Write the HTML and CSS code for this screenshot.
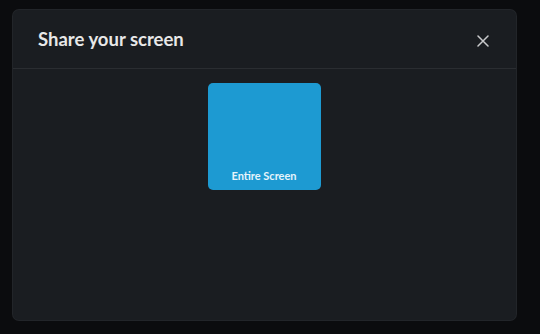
FILE: index.html
```html
<!DOCTYPE html>
<html lang="en">
<head>
  <meta charset="UTF-8">
  <title>Share your screen</title>
  <link rel="stylesheet" href="styles.css">
</head>
<body>
  <div class="modal">
    <div class="modal-header">
      <h1>Share your screen</h1>
      <button class="close" aria-label="Close">
        <svg width="12" height="12" viewBox="0 0 12 12"><path d="M1 1L11 11M11 1L1 11" stroke="#c9cacc" stroke-width="1.5" stroke-linecap="round"/></svg>
      </button>
    </div>
    <div class="modal-body">
      <div class="source">
        <span>Entire Screen</span>
      </div>
    </div>
  </div>
</body>
</html>
```

FILE: styles.css
```css
html, body {
  height: 100%;
}
body {
  margin: 0;
  padding: 10px 0 0 13px;
  box-sizing: border-box;
  background-color: #0b0c0e;
  font-family: Lato, "Open Sans", sans-serif;
}
.modal {
  width: 503px;
  height: 310px;
  background: #1a1d21;
  border-radius: 6px;
  box-shadow: 0 0 0 1px #222529;
  display: flex;
  flex-direction: column;
}
.modal-header {
  height: 58px;
  display: flex;
  align-items: center;
  justify-content: space-between;
  padding: 0 25px;
  border-bottom: 1px solid #2a2d31;
}
.modal-header h1 {
  margin: 0;
  font-size: 18.5px;
  font-weight: 700;
  color: #e8e8e8;
}
.close {
  background: none;
  border: none;
  padding: 0;
  width: 12px;
  height: 12px;
  margin-right: 2px;
  margin-top: 4px;
  cursor: pointer;
}
.close svg {
  display: block;
}
.modal-body {
  flex: 1;
  display: flex;
  justify-content: center;
  padding-top: 14px;
}
.source {
  width: 113px;
  height: 107px;
  margin-right: 1px;
  background: #1d9ad2;
  border-radius: 5px;
  display: flex;
  align-items: flex-end;
  justify-content: center;
  box-sizing: border-box;
  padding-bottom: 8px;
}
.source span {
  color: #e6f4fb;
  font-size: 11px;
  font-weight: 700;
}
```
